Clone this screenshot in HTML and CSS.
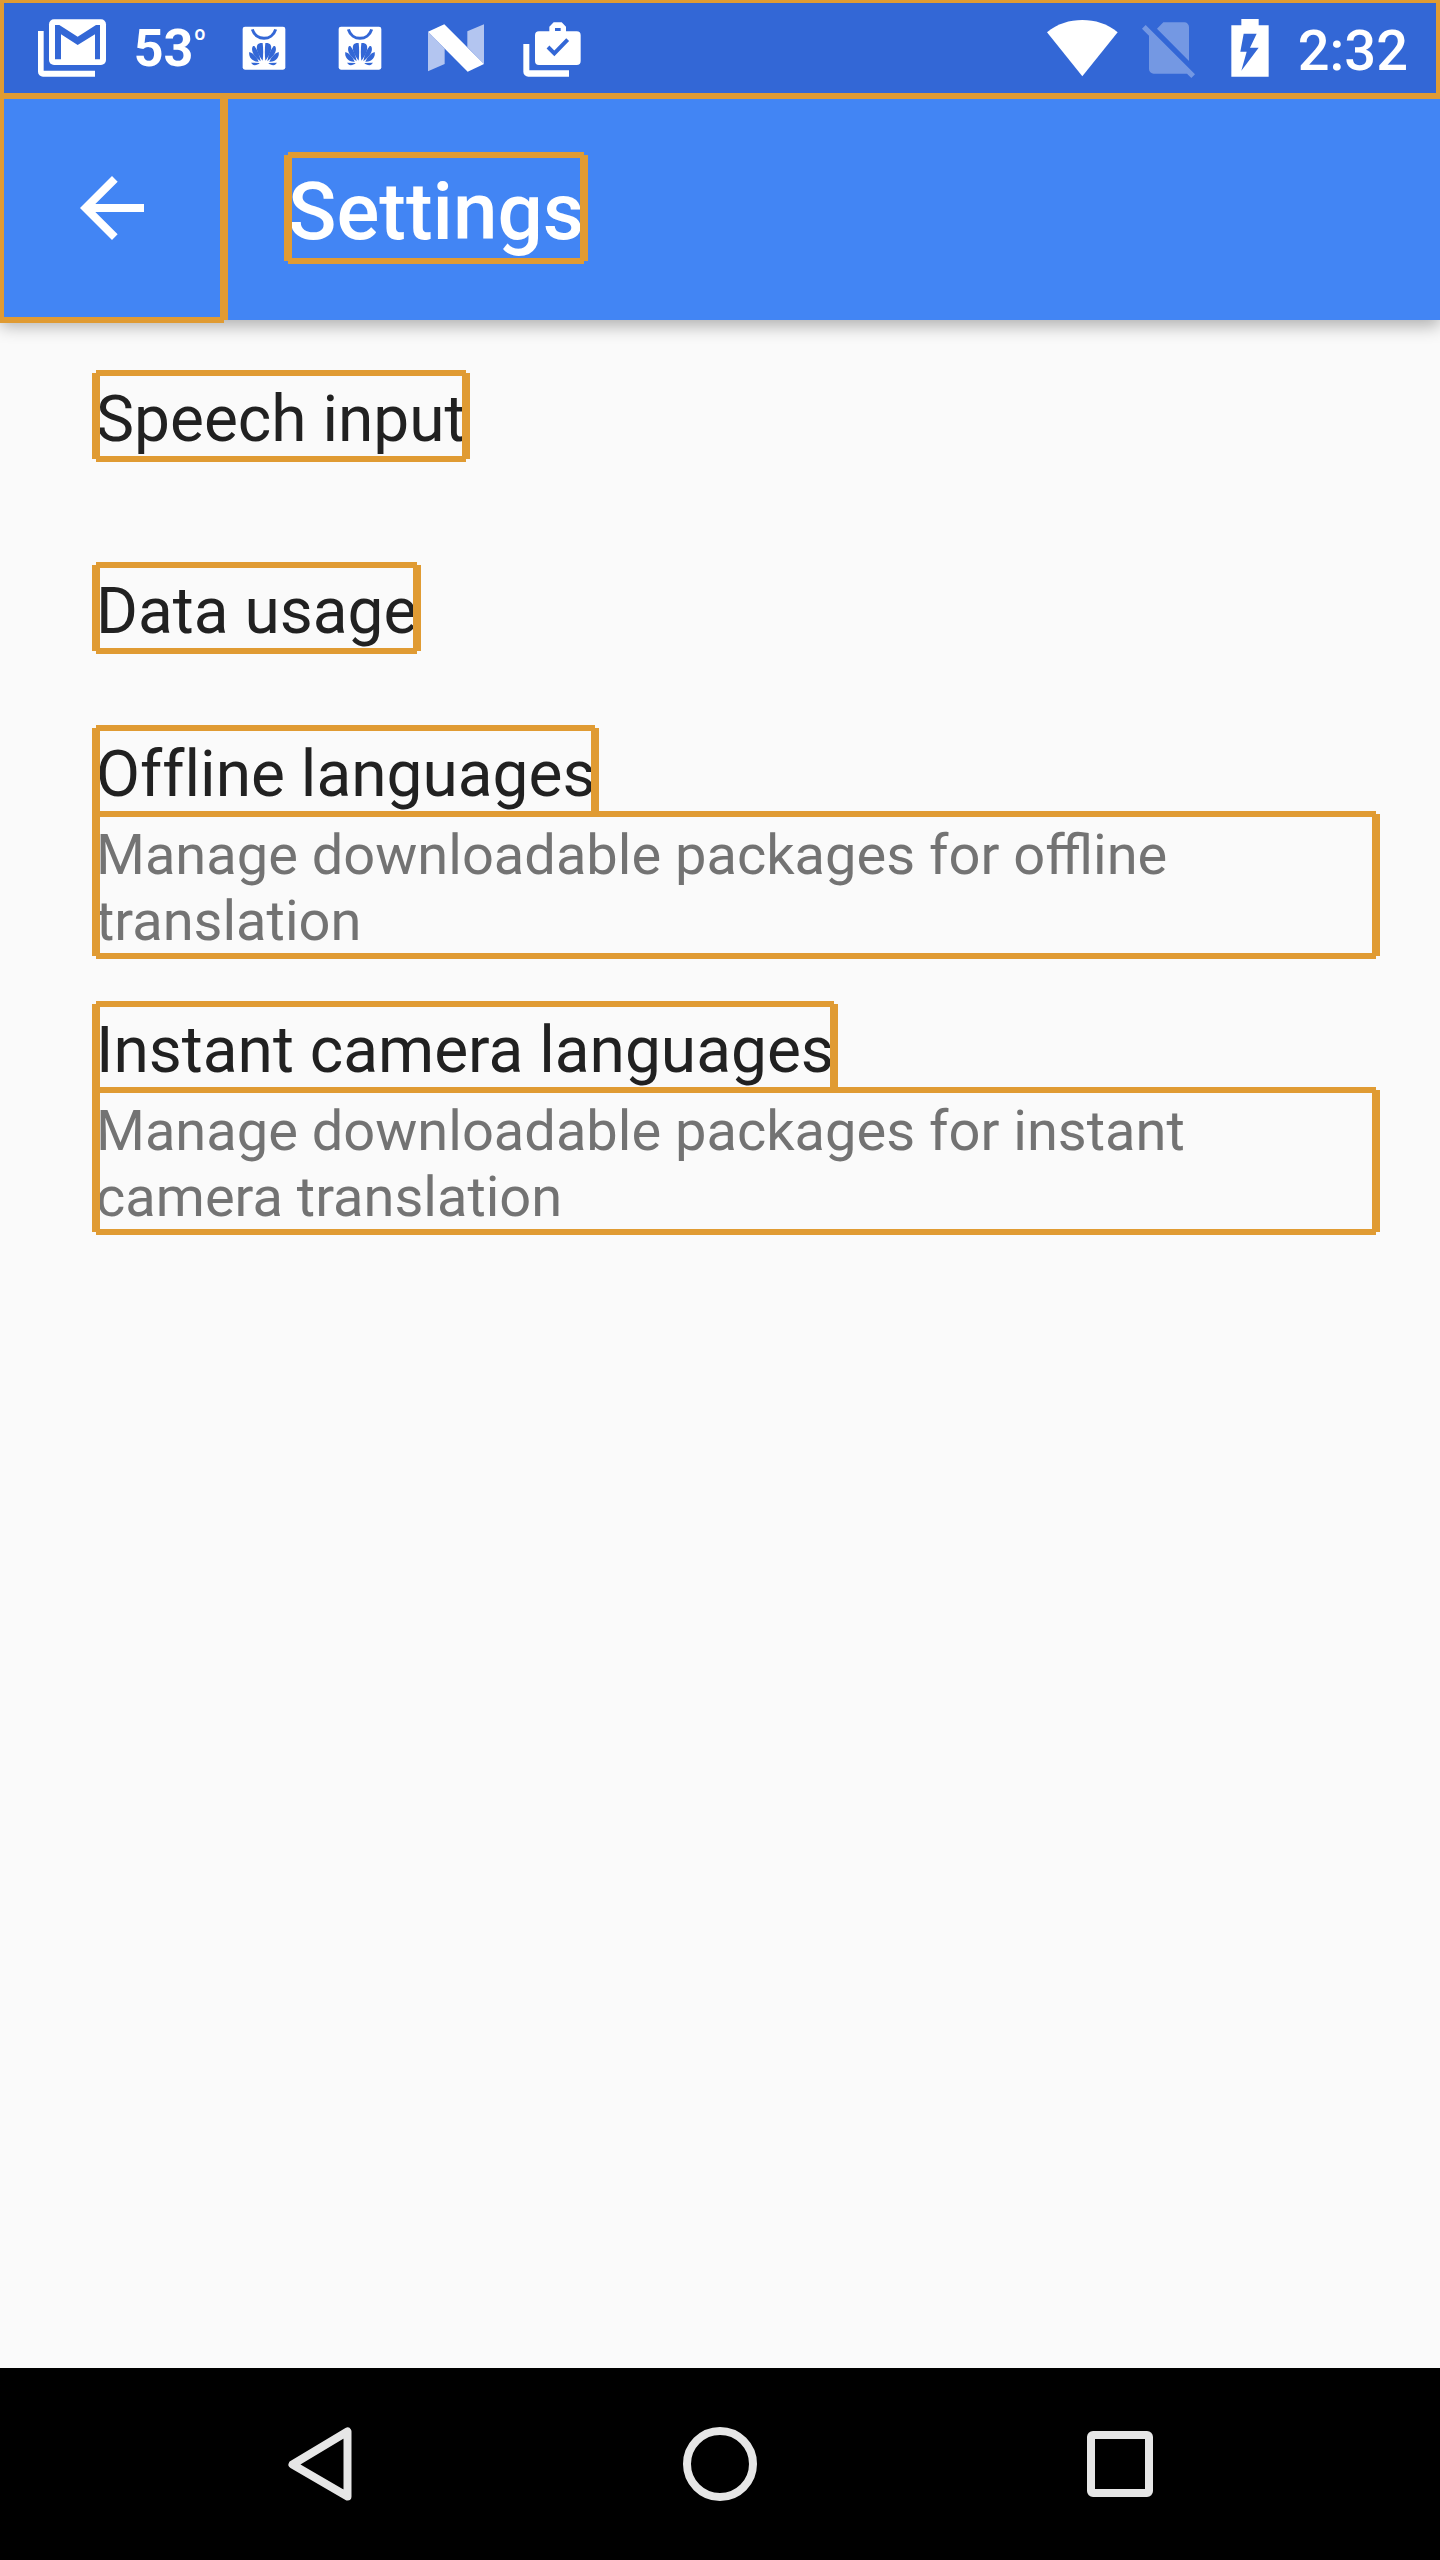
FILE: index.html
```html
<!DOCTYPE html>
<html lang="en">
<head>
<meta charset="utf-8">
<meta name="viewport" content="width=device-width, initial-scale=1">
<title>Settings</title>
<link rel="stylesheet" href="styles.css">
</head>
<body>
<div class="screen">
  <div class="status-bar outlined">
    <div class="status-group">
      <svg class="status-icon" viewBox="0 0 288 288" role="img" aria-label="Gmail">
        <rect x="75" y="58" width="171" height="137" rx="15" fill="#fff"/>
        <path fill="#3367d6" d="M93 75h13l55 35 55-35h12v103h-15v-75l-52 32-50-32v75H93z"/>
        <path fill="#fff" d="M42 93h17v119h154v18H57a15 15 0 0 1-15-15z"/>
      </svg>
      <span class="temperature">53<span class="degree">º</span></span>
      <svg class="status-icon" viewBox="0 0 288 288" role="img" aria-label="Huawei store">
        <rect x="80" y="80" width="128" height="129" rx="7" fill="#fff"/>
        <path fill="none" stroke="#3367d6" stroke-width="9" d="M109 88c11 36 59 36 70 0"/>
        <g id="petals" fill="#3367d6">
          <path d="M140 182c-14-18-21-35-16-47 3-6 15-7 16-5 2 16 2 36 0 52z"/>
          <path d="M134 184c-18-13-29-29-25-42 1-4 4-5 6-4 9 10 16 27 19 46z"/>
          <path d="M128 185c-19 1-31-13-28-29 12 4 22 14 28 29z"/>
          <path d="M105 188l26 1c-5 6-17 9-22 4z"/>
        </g>
        <use href="#petals" transform="translate(288) scale(-1 1)"/>
      </svg>
      <svg class="status-icon" viewBox="0 0 288 288" role="img" aria-label="Huawei store">
        <rect x="80" y="80" width="128" height="129" rx="7" fill="#fff"/>
        <path fill="none" stroke="#3367d6" stroke-width="9" d="M109 88c11 36 59 36 70 0"/>
        <use href="#petals"/>
        <use href="#petals" transform="translate(288) scale(-1 1)"/>
      </svg>
      <svg class="status-icon" viewBox="0 0 288 288" role="img" aria-label="Android Nougat">
        <path fill="#b3c5f0" d="M60 95l50 51v46l-50 22zM178 94l50-21v119l-50-51z"/>
        <path fill="#fff" d="M60 95l49-22 119 119-49 23z"/>
      </svg>
      <svg class="status-icon" viewBox="0 0 288 288" role="img" aria-label="Work profile">
        <path fill="#fff" fill-rule="evenodd" d="M105 94h31V80l13-13h24l13 13v14h32a12 12 0 0 1 12 12v77a12 12 0 0 1-12 12H105a12 12 0 0 1-12-12v-77a12 12 0 0 1 12-12zM153 84v9h17v-9z"/>
        <path fill="none" stroke="#3367d6" stroke-width="12" d="M132 141l19 19 40-41"/>
        <path fill="#fff" d="M58 132h18v79h119v19H73a15 15 0 0 1-15-15z"/>
      </svg>
    </div>
    <div class="status-group">
      <svg class="status-icon status-icon-narrow" viewBox="0 0 252 288" role="img" aria-label="Wi-Fi">
        <path fill="#fff" d="M21 97C52 71 89 60 127 60s75 11 106 37L127 229z"/>
      </svg>
      <svg class="status-icon status-icon-narrow" viewBox="0 0 252 288" role="img" aria-label="No SIM card">
        <path fill="#fff" fill-opacity=".32" d="M118 67h63a14 14 0 0 1 14 14v102L99 86zM65 75l148 148-11 11-13-13H89a14 14 0 0 1-14-14V107L54 86z"/>
      </svg>
      <svg class="status-icon status-icon-narrow" viewBox="0 0 252 288" role="img" aria-label="Battery charging">
        <path fill="#fff" fill-rule="evenodd" d="M70 76h30V57h52v19h30v154H70zM107 101l-10 54h19l-16 57 52-69h-26l20-42z"/>
      </svg>
      <time class="clock">2:32</time>
    </div>
  </div>

  <header class="app-bar">
    <button class="back-button outlined" type="button" aria-label="Navigate up">
      <svg class="back-icon" viewBox="0 0 24 24"><path fill="#fff" d="M20 11H7.830l5.590-5.590L12 4l-8 8 8 8 1.410-1.410L7.830 13H20v-2z"/></svg>
    </button>
    <h1 class="app-title outlined">Settings</h1>
  </header>

  <main class="settings">
    <a class="setting" href="#speech"><span class="setting-title outlined">Speech input</span></a>
    <a class="setting" href="#data"><span class="setting-title outlined">Data usage</span></a>
    <a class="setting" href="#offline">
      <span class="setting-title outlined">Offline languages</span>
      <span class="setting-summary outlined">Manage downloadable packages for offline translation</span>
    </a>
    <a class="setting" href="#camera">
      <span class="setting-title outlined">Instant camera languages</span>
      <span class="setting-summary outlined">Manage downloadable packages for instant camera translation</span>
    </a>
  </main>

  <nav class="nav-bar" aria-label="System">
    <button class="nav-button" type="button" aria-label="Back">
      <svg class="nav-icon" viewBox="0 0 80 80"><path d="M12.500 40.500L67.500 7.500v65z"/></svg>
    </button>
    <button class="nav-button" type="button" aria-label="Home">
      <svg class="nav-icon" viewBox="0 0 80 80"><circle cx="40" cy="40" r="33"/></svg>
    </button>
    <button class="nav-button" type="button" aria-label="Recent apps">
      <svg class="nav-icon" viewBox="0 0 80 80"><rect x="11" y="11" width="58" height="58" rx="2"/></svg>
    </button>
  </nav>
</div>
</body>
</html>
```

FILE: styles.css
```css
* {
  box-sizing: border-box;
}

body {
  margin: 0;
  background: #fafafa;
  color: #212121;
  font-family: Roboto, sans-serif;
}

button {
  padding: 0;
  border: 0;
  background: none;
  font: inherit;
}

.screen {
  display: flex;
  flex-direction: column;
  min-height: 100vh;
  overflow: hidden;
}

/* Orange layout bounds, centred on the edges of the element */
.outlined {
  position: relative;
}

.outlined::before,
.outlined::after {
  content: "";
  position: absolute;
  border: 0 solid #e09b33;
  pointer-events: none;
}

.outlined::before {
  inset: -3px 0;
  border-width: 6px 0;
}

.outlined::after {
  inset: 0 -4px;
  border-width: 0 8px;
}

/* Status bar */
.status-bar {
  z-index: 2;
  display: flex;
  justify-content: space-between;
  height: 96px;
  padding: 0 32px 0 24px;
  background: #3367d6;
  color: #fff;
}

.status-group {
  display: flex;
}

.status-icon {
  width: 96px;
  height: 96px;
}

.status-icon-narrow {
  width: 84px;
}

.temperature {
  display: flex;
  justify-content: center;
  width: 96px;
  padding-left: 4px;
  font-size: 52px;
  font-weight: 700;
  line-height: 98px;
}

.degree {
  font-size: 28px;
  line-height: 80px;
}

.clock {
  padding-left: 6px;
  font-size: 56px;
  font-weight: 500;
  line-height: 102px;
}

/* App bar */
.app-bar {
  position: relative;
  z-index: 1;
  display: flex;
  align-items: center;
  gap: 64px;
  height: 224px;
  background: #4285f4;
  color: #fff;
  box-shadow: 0 6px 16px rgba(0, 0, 0, 0.3);
}

.back-button {
  display: flex;
  align-items: center;
  justify-content: center;
  width: 224px;
  height: 224px;
}

.back-icon {
  width: 96px;
  height: 96px;
}

.app-title {
  margin: 0;
  padding-top: 8px;
  font-size: 80px;
  font-weight: 500;
  line-height: 98px;
}

/* Settings list */
.settings {
  flex: 1;
}

.setting {
  display: flex;
  flex-direction: column;
  align-items: flex-start;
  justify-content: center;
  min-height: 192px;
  padding: 24px 64px 24px 96px;
  color: inherit;
  text-decoration: none;
}

.setting-title {
  padding-top: 8px;
  font-size: 64px;
  font-variant-ligatures: none;
  line-height: 78px;
}

.setting-summary {
  align-self: stretch;
  padding: 8px 0 2px;
  color: #737373;
  font-size: 56px;
  line-height: 66px;
}

/* System navigation */
.nav-bar {
  display: flex;
  height: 192px;
  padding: 0 120px;
  background: #000;
}

.nav-button {
  display: flex;
  flex: 1;
  align-items: center;
  justify-content: center;
}

.nav-icon {
  width: 80px;
  height: 80px;
  fill: none;
  stroke: #e6e6e6;
  stroke-width: 8;
  stroke-linejoin: round;
}
```
